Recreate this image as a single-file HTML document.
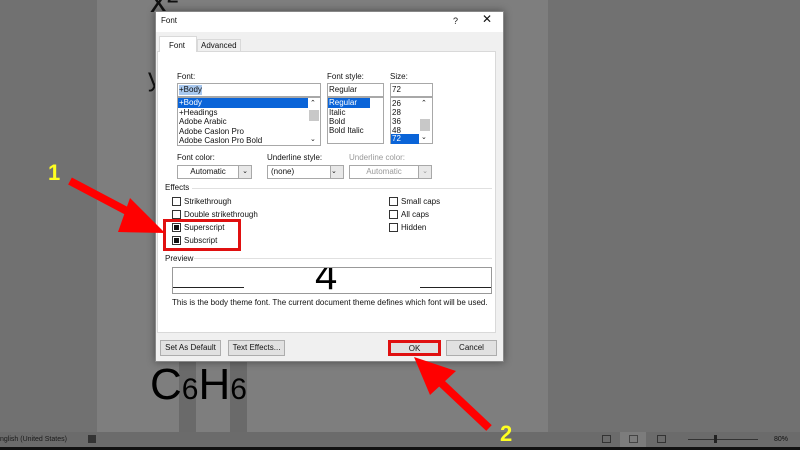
<!DOCTYPE html>
<html><head><meta charset="utf-8"><style>
*{margin:0;padding:0;box-sizing:border-box}
body{width:800px;height:450px;overflow:hidden;background:#717171;position:relative;font-family:"Liberation Sans",sans-serif;font-size:8px;color:#111}
.a{position:absolute}
.t{position:absolute;white-space:nowrap;font-size:8px;line-height:10px}
.box{position:absolute;background:#fff;border:1px solid #a8a8a8}
.cb{position:absolute;width:9px;height:9px;border:1px solid #333;background:#fff}
.cb.on::after{content:"";position:absolute;left:1px;top:1px;width:5px;height:5px;background:#111}
.btn{position:absolute;height:16px;background:#e1e1e1;border:1px solid #adadad;text-align:center;line-height:14px;font-size:8px}
.combo{position:absolute;height:14px;background:#fff;border:1px solid #a8a8a8;font-size:8px;line-height:12px;text-align:center}
.combo i{position:absolute;right:0;top:0;width:13px;height:12px;background:#e8e8e8;border-left:1px solid #a8a8a8;font-style:normal;line-height:12px;font-size:7px}
.sel{background:#0a64d8;color:#fff}
</style></head><body>
<div class="a" style="left:97px;top:0;width:451px;height:432px;background:#7e7e7e"></div>
<div class="a" style="left:179px;top:360px;width:17px;height:72px;background:#6a6a6a"></div>
<div class="a" style="left:230px;top:360px;width:17px;height:72px;background:#6a6a6a"></div>
<div class="a" style="left:150px;top:360px;font-size:44px;line-height:50px;color:#000">C<span style="font-size:30px">6</span>H<span style="font-size:30px">6</span></div>
<div class="a" style="left:150px;top:-18px;font-size:34px;color:#111">x²</div>
<div class="a" style="left:148px;top:62px;font-size:26px;color:#111">y</div>
<!-- status bar -->
<div class="a" style="left:0;top:432px;width:800px;height:15px;background:#6b6b6b"></div>
<div class="t" style="left:0;top:435px;font-size:7px;color:#1a1a1a">nglish (United States)</div>
<div class="a" style="left:88px;top:435px;width:8px;height:8px;background:#333"></div>
<div class="a" style="left:620px;top:432px;width:26px;height:15px;background:#7c7c7c"></div>
<div class="a" style="left:602px;top:435px;width:9px;height:8px;border:1px solid #333"></div>
<div class="a" style="left:629px;top:435px;width:9px;height:8px;border:1px solid #444"></div>
<div class="a" style="left:657px;top:435px;width:9px;height:8px;border:1px solid #333"></div>
<div class="a" style="left:688px;top:439px;width:70px;height:1px;background:#333"></div>
<div class="a" style="left:714px;top:435px;width:3px;height:8px;background:#222"></div>
<div class="t" style="left:774px;top:435px;font-size:7px">80%</div>
<div class="a" style="left:0;top:447px;width:800px;height:3px;background:#111"></div>
<!-- dialog -->
<div class="a" style="left:155px;top:11px;width:349px;height:351px;background:#f0f0f0;border:1px solid #888;box-shadow:0 0 8px rgba(0,0,0,.4)"></div>
<div class="a" style="left:156px;top:12px;width:347px;height:20px;background:#fff"></div>
<div class="t" style="left:161px;top:16px">Font</div>
<div class="t" style="left:453px;top:16px;font-size:9px">?</div>
<div class="t" style="left:482px;top:14px;font-size:12px">✕</div>
<div class="a" style="left:157px;top:51px;width:339px;height:282px;background:#fff;border:1px solid #d9d9d9"></div>
<div class="a" style="left:159px;top:36px;width:38px;height:16px;background:#fff;border:1px solid #d9d9d9;border-bottom:none"></div>
<div class="t" style="left:169px;top:41px">Font</div>
<div class="a" style="left:197px;top:39px;width:44px;height:12px;border:1px solid #d9d9d9;border-bottom:none"></div>
<div class="t" style="left:201px;top:41px">Advanced</div>
<div class="t" style="left:177px;top:72px">Font:</div>
<div class="t" style="left:327px;top:72px">Font style:</div>
<div class="t" style="left:390px;top:72px">Size:</div>
<div class="box" style="left:177px;top:83px;width:144px;height:14px"></div>
<div class="t" style="left:179px;top:85px;background:#a9c8ee">+Body</div>
<div class="box" style="left:177px;top:97px;width:144px;height:49px"></div>
<div class="t sel" style="left:178px;top:98px;width:130px;padding-left:1px">+Body</div>
<div class="t" style="left:179px;top:108px">+Headings</div>
<div class="t" style="left:179px;top:117px">Adobe Arabic</div>
<div class="t" style="left:179px;top:127px">Adobe Caslon Pro</div>
<div class="t" style="left:179px;top:136px">Adobe Caslon Pro Bold</div>
<div class="a" style="left:309px;top:110px;width:10px;height:11px;background:#c8c8c8"></div>
<div class="t" style="left:310px;top:99px;font-size:7px">⌃</div>
<div class="t" style="left:310px;top:135px;font-size:7px">⌄</div>
<div class="box" style="left:327px;top:83px;width:57px;height:14px"></div>
<div class="t" style="left:329px;top:85px">Regular</div>
<div class="box" style="left:327px;top:97px;width:57px;height:47px"></div>
<div class="t sel" style="left:328px;top:98px;width:42px;padding-left:1px">Regular</div>
<div class="t" style="left:329px;top:108px">Italic</div>
<div class="t" style="left:329px;top:117px">Bold</div>
<div class="t" style="left:329px;top:126px">Bold Italic</div>
<div class="box" style="left:390px;top:83px;width:43px;height:14px"></div>
<div class="t" style="left:392px;top:85px">72</div>
<div class="box" style="left:390px;top:97px;width:43px;height:47px"></div>
<div class="t" style="left:392px;top:99px">26</div>
<div class="t" style="left:392px;top:108px">28</div>
<div class="t" style="left:392px;top:117px">36</div>
<div class="t" style="left:392px;top:126px">48</div>
<div class="t sel" style="left:391px;top:134px;width:28px;padding-left:1px">72</div>
<div class="a" style="left:420px;top:119px;width:10px;height:12px;background:#c8c8c8"></div>
<div class="t" style="left:421px;top:99px;font-size:7px">⌃</div>
<div class="t" style="left:421px;top:133px;font-size:7px">⌄</div>
<div class="t" style="left:177px;top:153px">Font color:</div>
<div class="t" style="left:267px;top:153px">Underline style:</div>
<div class="t" style="left:349px;top:153px;color:#999">Underline color:</div>
<div class="combo" style="left:177px;top:165px;width:75px;padding-right:13px">Automatic<i>⌄</i></div>
<div class="combo" style="left:267px;top:165px;width:77px;text-align:left;padding-left:3px">(none)<i>⌄</i></div>
<div class="combo" style="left:349px;top:165px;width:83px;padding-right:13px;color:#999">Automatic<i>⌄</i></div>
<div class="t" style="left:165px;top:183px">Effects</div>
<div class="a" style="left:192px;top:188px;width:300px;height:1px;background:#e0e0e0"></div>
<div class="cb" style="left:172px;top:197px"></div><div class="t" style="left:184px;top:197px">Strikethrough</div>
<div class="cb" style="left:172px;top:210px"></div><div class="t" style="left:184px;top:210px">Double strikethrough</div>
<div class="cb on" style="left:172px;top:223px"></div><div class="t" style="left:184px;top:223px">Superscript</div>
<div class="cb on" style="left:172px;top:236px"></div><div class="t" style="left:184px;top:236px">Subscript</div>
<div class="cb" style="left:389px;top:197px"></div><div class="t" style="left:401px;top:197px">Small caps</div>
<div class="cb" style="left:389px;top:210px"></div><div class="t" style="left:401px;top:210px">All caps</div>
<div class="cb" style="left:389px;top:223px"></div><div class="t" style="left:401px;top:223px">Hidden</div>
<div class="a" style="left:163px;top:219px;width:78px;height:32px;border:3px solid #e01010"></div>
<div class="t" style="left:165px;top:254px">Preview</div>
<div class="a" style="left:194px;top:258px;width:298px;height:1px;background:#e0e0e0"></div>
<div class="a" style="left:172px;top:267px;width:320px;height:27px;border:1px solid #999;background:#fff;overflow:hidden">
<div class="a" style="left:0;top:19px;width:71px;height:1px;background:#222"></div>
<div class="a" style="left:247px;top:19px;width:72px;height:1px;background:#222"></div>
<svg class="a" style="left:0;top:0" width="320" height="27"><text x="142" y="21" font-family="Liberation Sans" font-size="40" fill="#000">4</text></svg>
</div>
<div class="t" style="left:172px;top:298px">This is the body theme font. The current document theme defines which font will be used.</div>
<div class="btn" style="left:160px;top:340px;width:61px">Set As Default</div>
<div class="btn" style="left:228px;top:340px;width:57px">Text Effects...</div>
<div class="btn" style="left:388px;top:340px;width:53px;border:3px solid #e01010;line-height:11px">OK</div>
<div class="btn" style="left:446px;top:340px;width:51px">Cancel</div>
<!-- arrows -->
<svg class="a" style="left:0;top:0" width="800" height="450">
<line x1="70" y1="181" x2="140" y2="218" stroke="#ff0000" stroke-width="8"/>
<polygon points="130,198 165,233 118,232" fill="#ff0000"/>
<line x1="489" y1="428" x2="438" y2="380" stroke="#ff0000" stroke-width="8"/>
<polygon points="414,357 456,371 430,395" fill="#ff0000"/>
<text x="48" y="180" font-family="Liberation Sans" font-weight="bold" font-size="22" fill="#ffff20">1</text>
<text x="500" y="441" font-family="Liberation Sans" font-weight="bold" font-size="22" fill="#ffff20">2</text>
</svg>
</body></html>
